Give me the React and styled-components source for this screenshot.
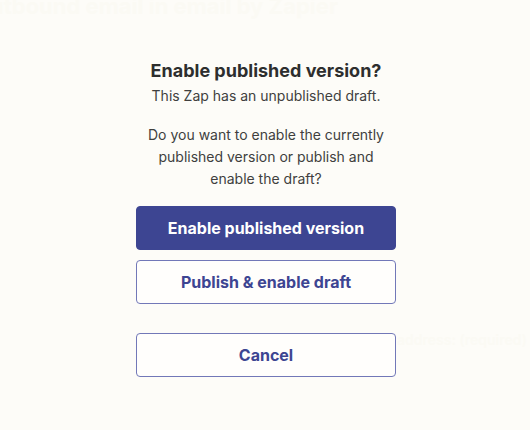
import React from 'react';
import styled, { createGlobalStyle } from 'styled-components';

const GlobalStyle = createGlobalStyle`
  body {
    margin: 0;
    background: #fdfcf8;
    font-family: Inter, 'Noto Sans', sans-serif;
  }
`;

const Page = styled.div`
  position: relative;
  width: 530px;
  height: 430px;
  padding-left: 2px;
  box-sizing: border-box;
  overflow: hidden;
`;

const Behind = styled.div`
  position: absolute;
  left: 0;
  top: 0;
  right: 0;
  bottom: 0;
  color: #fbfaf4;
  pointer-events: none;
`;

const BehindTitle = styled.div`
  position: absolute;
  left: -27px;
  top: -7px;
  font-size: 22px;
  font-weight: 700;
  white-space: nowrap;
`;

const BehindLabel = styled.div`
  position: absolute;
  left: 357px;
  top: 331px;
  font-size: 14px;
  font-weight: 600;
  white-space: nowrap;
`;

const Modal = styled.div`
  position: relative;
  width: 260px;
  margin: 0 auto;
  padding-top: 59px;
  display: flex;
  flex-direction: column;
  align-items: stretch;
  text-align: center;
`;

const Title = styled.h2`
  margin: 0;
  font-size: 18px;
  line-height: 24px;
  font-weight: 700;
  color: #2d2e2e;
`;

const Text = styled.p`
  margin: ${(p) => (p.$gap ? '17px' : '2px')} 0 0;
  padding: 0 12px;
  font-size: 14px;
  line-height: 22px;
  color: #403f3e;
`;

const Actions = styled.div`
  display: flex;
  flex-direction: column;
  gap: 10px;
  margin-top: 16px;
`;

const Button = styled.button`
  height: 44px;
  border-radius: 4px;
  border: 1px solid ${(p) => (p.$primary ? '#3d4592' : '#7278b8')};
  background: ${(p) => (p.$primary ? '#3d4592' : '#fffefc')};
  color: ${(p) => (p.$primary ? '#ffffff' : '#3d4592')};
  font-family: Inter, 'Noto Sans', sans-serif;
  font-size: 16px;
  font-weight: 700;
  margin-top: ${(p) => (p.$spaced ? '19px' : '0')};
  cursor: pointer;
`;

export default function App() {
  return (
    <Page>
      <GlobalStyle />
      <Behind>
        <BehindTitle>Outbound email in email by Zapier</BehindTitle>
        <BehindLabel>Email address: (required)</BehindLabel>
      </Behind>
      <Modal>
        <Title>Enable published version?</Title>
        <Text>This Zap has an unpublished draft.</Text>
        <Text $gap>
          Do you want to enable the currently published version or publish and
          enable the draft?
        </Text>
        <Actions>
          <Button $primary>Enable published version</Button>
          <Button>Publish &amp; enable draft</Button>
          <Button $spaced>Cancel</Button>
        </Actions>
      </Modal>
    </Page>
  );
}
